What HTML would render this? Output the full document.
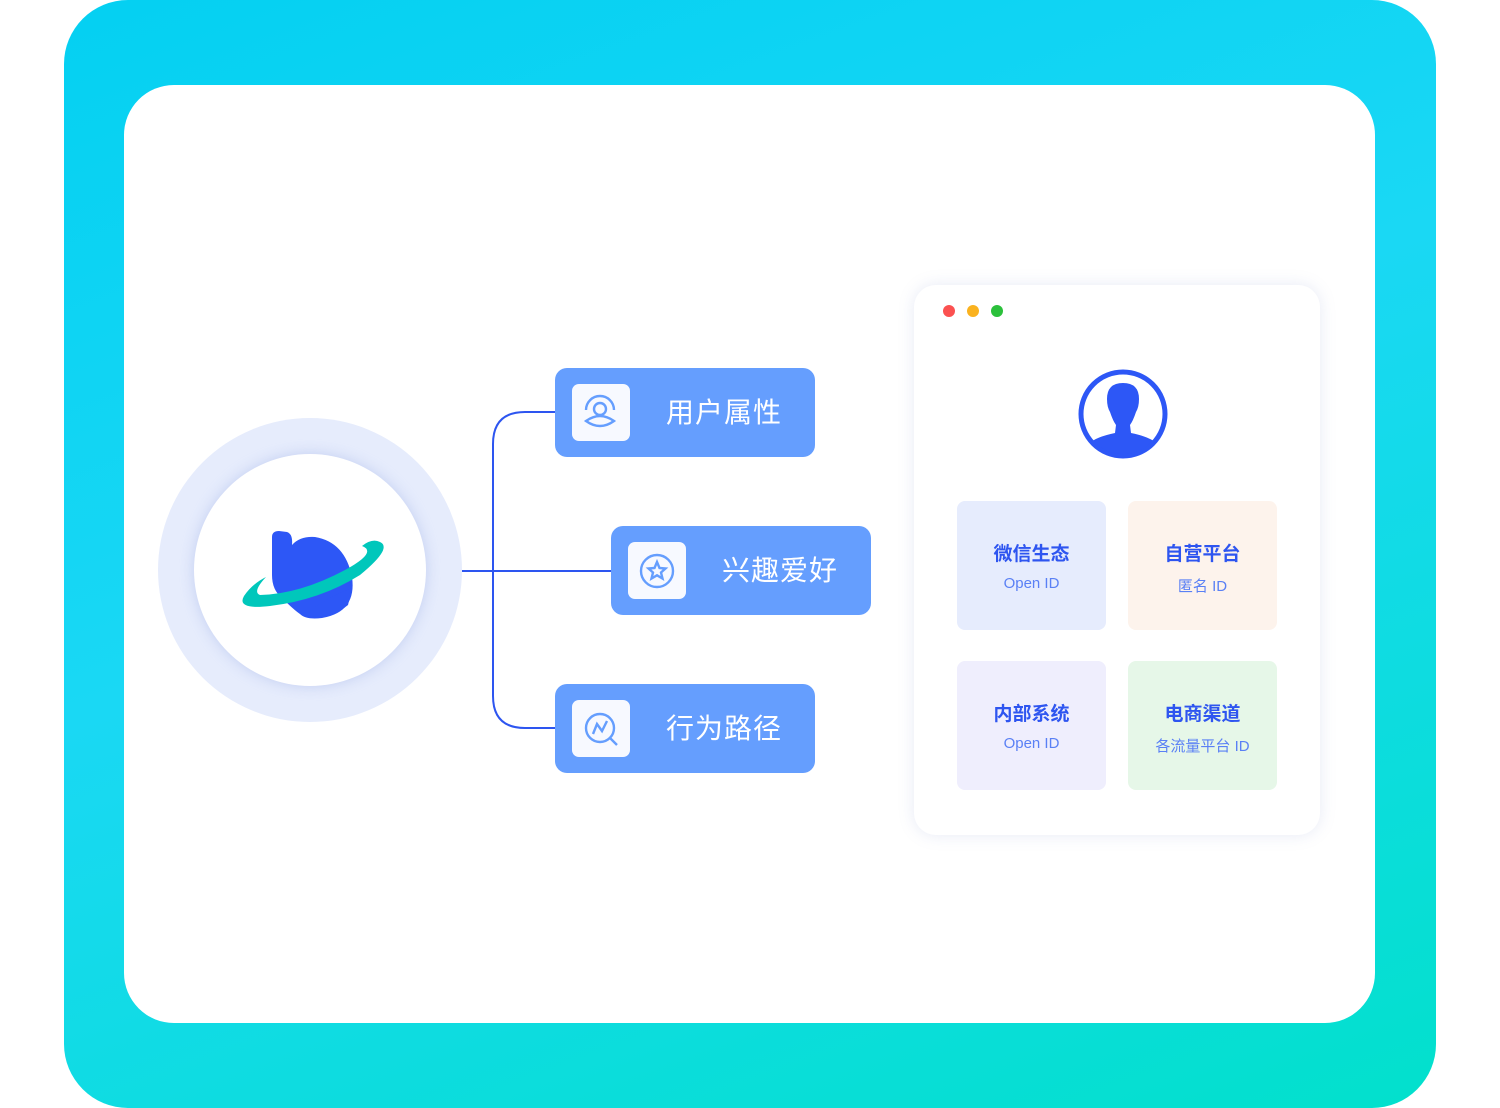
<!DOCTYPE html>
<html><head><meta charset="utf-8"><style>
*{margin:0;padding:0;box-sizing:border-box}
body{width:1500px;height:1108px;background:#fff;position:relative;overflow:hidden;font-family:"Liberation Sans","Noto Sans CJK SC",sans-serif}
.frame{position:absolute;left:64px;top:0;width:1372px;height:1108px;border-radius:64px;background:linear-gradient(160deg,#04d0f2 0%,#1ad8f4 45%,#02e0cc 100%)}
.inner{position:absolute;left:124px;top:85px;width:1251px;height:938px;border-radius:50px;background:#fff}
.abs{position:absolute}
.card{position:absolute;width:260px;height:89px;border-radius:12px;background:#659efe;color:#fff;font-size:28px;letter-spacing:1px}
.card .ic{position:absolute;left:17px;top:16px;width:58px;height:57px;border-radius:7px;background:#f7f9ff}
.card span{position:absolute;left:111px;top:23px}
.panel{position:absolute;left:914px;top:285px;width:406px;height:550px;border-radius:22px;background:#fff;box-shadow:0 0 16px rgba(120,140,200,.18)}
.tile{position:absolute;width:149px;height:129px;border-radius:8px;text-align:center}
.tile b{display:block;margin-top:38px;font-size:19px;color:#2e55f0;font-weight:bold}
.tile i{display:block;margin-top:9px;font-style:normal;font-size:15px;color:#5a80f5}
.dot{position:absolute;top:20px;width:12px;height:12px;border-radius:50%}
</style></head><body>
<div class="frame"></div>
<div class="inner"></div>
<div class="abs" style="left:158px;top:418px;width:304px;height:304px;border-radius:50%;background:#e6ecfc"></div>
<div class="abs" style="left:194px;top:454px;width:232px;height:232px;border-radius:50%;background:#fff;box-shadow:0 0 14px rgba(150,170,230,.45)"></div>
<svg class="abs" style="left:0;top:0" width="1500" height="1108">
<g fill="none" stroke="#2d55f0" stroke-width="2">
<path d="M555 412 H525 Q493 412 493 444 V696 Q493 728 525 728 H555"/>
<path d="M462 571 H611"/>
</g>
<path d="M272 537 Q272 531 279 531 L287 532 Q293 534 292 545 Q300 536 315 537 Q345 542 352 577 Q357 612 322 618 Q306 620 300 614 Q294 610 282 598 Q272 590 272 575 Z" fill="#2d57f6"/>
<path d="M380 542 Q393 548 360 575 Q320 600 270 606 Q236 610 244 596 Q252 584 266 577 Q252 592 260 595 Q300 594 345 570 Q378 552 362 546 Q372 538 380 542 Z" fill="#00c7bb"/>
<path d="M305 615 Q325 598 352 588 L348 605 Q330 620 305 615Z" fill="#2d57f6"/>
</svg>
<div class="card" style="left:555px;top:368px"><div class="ic"><svg width="58" height="57"><g fill="none" stroke="#659efe" stroke-width="2.4"><circle cx="28" cy="25" r="6"/><path d="M14 26 A14 14 0 0 1 42 26"/><path d="M14 37 Q28 27 42 37 Q28 47 14 37Z"/></g></svg></div><span>用户属性</span></div>
<div class="card" style="left:611px;top:526px"><div class="ic"><svg width="58" height="57"><g fill="none" stroke="#659efe" stroke-width="2.4"><circle cx="29" cy="29" r="16"/><path d="M29 20 L31.5 26 L37.5 26.5 L33 30.5 L34.5 36.5 L29 33.3 L23.5 36.5 L25 30.5 L20.5 26.5 L26.5 26Z"/></g></svg></div><span>兴趣爱好</span></div>
<div class="card" style="left:555px;top:684px"><div class="ic"><svg width="58" height="57"><g fill="none" stroke="#659efe" stroke-width="2.4"><circle cx="28" cy="28" r="14"/><path d="M38 38 L45 45"/><path d="M21 34 L25 24 L30 31 L35 21"/></g></svg></div><span>行为路径</span></div>
<div class="panel">
<div class="dot" style="left:29px;background:#fb5150"></div>
<div class="dot" style="left:53px;background:#fab21f"></div>
<div class="dot" style="left:77px;background:#2bc03b"></div>
<svg class="abs" style="left:164px;top:84px" width="90" height="90"><defs><clipPath id="c"><circle cx="45" cy="45" r="40"/></clipPath></defs><circle cx="45" cy="45" r="42" fill="none" stroke="#2d57f6" stroke-width="5"/><g clip-path="url(#c)" fill="#2d57f6"><path d="M45 14 Q61 14 61 30 Q61 38 58 43 Q55 52 52 56 L53 64 Q72 68 78 74 L78 95 L12 95 L12 74 Q18 68 37 64 L38 56 Q35 52 32 43 Q29 38 29 30 Q29 14 45 14Z"/></g></svg>
<div class="tile" style="left:43px;top:216px;background:#e6ecfd"><b>微信生态</b><i>Open ID</i></div>
<div class="tile" style="left:214px;top:216px;background:#fdf3ec"><b>自营平台</b><i>匿名 ID</i></div>
<div class="tile" style="left:43px;top:376px;background:#efeefd"><b>内部系统</b><i>Open ID</i></div>
<div class="tile" style="left:214px;top:376px;background:#e6f7e8"><b>电商渠道</b><i>各流量平台 ID</i></div>
</div>
</body></html>
